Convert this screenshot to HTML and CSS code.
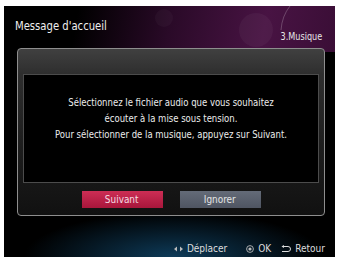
FILE: index.html
```html
<!DOCTYPE html>
<html lang="fr">
<head>
<meta charset="UTF-8">
<title>Message d'accueil</title>
<link rel="stylesheet" href="styles.css">
</head>
<body>
<div id="screen">
  <svg class="deco" width="331" height="60" viewBox="0 0 331 60">
    <circle cx="252" cy="24" r="17" fill="rgba(255,255,255,0.04)"/>
    <circle cx="160" cy="12" r="9" fill="rgba(255,255,255,0.03)"/>
    <path d="M286 0 Q278 10 277 24" stroke="rgba(255,255,255,0.22)" stroke-width="1" fill="none"/>
  </svg>
  <div id="header">
    <div id="title">Message d'accueil</div>
    <div id="step">3.Musique</div>
  </div>
  <div id="panel">
    <div id="message">
      <p>Sélectionnez le fichier audio que vous souhaitez</p>
      <p>écouter à la mise sous tension.</p>
      <p>Pour sélectionner de la musique, appuyez sur Suivant.</p>
    </div>
    <div id="buttons">
      <button class="btn btn-next"><span>Suivant</span></button>
      <button class="btn btn-skip"><span>Ignorer</span></button>
    </div>
  </div>
  <div id="footer">
    <span class="hint hint-move">
      <svg width="9" height="6" viewBox="0 0 9 6"><path d="M0 3 L3 0.5 V5.5 Z M9 3 L6 0.5 V5.5 Z" fill="#bbb"/></svg>Déplacer</span>
    <span class="hint">
      <svg width="8" height="8" viewBox="0 0 8 8"><circle cx="4" cy="4" r="3.4" fill="none" stroke="#bbb" stroke-width="0.9"/><circle cx="4" cy="4" r="1.6" fill="#bbb"/></svg>OK</span>
    <span class="hint">
      <svg width="10" height="8" viewBox="0 0 10 8"><path d="M2.5 1.5 H7 A2.5 2.5 0 0 1 7 6.5 H1" fill="none" stroke="#ddd" stroke-width="1"/><path d="M0.5 1.5 L3 0 V3 Z" fill="#ddd"/></svg>Retour</span>
  </div>
</div>
</body>
</html>
```

FILE: styles.css
```css
body {
  margin: 0;
  background-color: white;
  font-family: "Liberation Sans Narrow", "DejaVu Sans Condensed", Roboto, sans-serif;
}
#screen {
  position: relative;
  margin: 6px 2px 2px 4px;
  width: 331px;
  height: 251px;
  overflow: hidden;
  background:
    radial-gradient(ellipse 150px 45px at 170px 100%, rgba(18, 78, 118, 0.75), rgba(0, 0, 0, 0)),
    linear-gradient(100deg, #000 22%, #2a0a28 50%, #481343 78%, #3a0e36 100%) top left / 100% 46px no-repeat,
    #000;
}
.deco {
  position: absolute;
  top: 0;
  left: 0;
}
#header {
  position: relative;
  display: flex;
  justify-content: space-between;
  align-items: flex-start;
  height: 42px;
  padding: 12px 13px 0 11px;
  box-sizing: border-box;
}
#title {
  color: #eee;
  font-size: 13px;
  line-height: 15px;
  transform: scaleX(0.86);
  transform-origin: left center;
}
#step {
  color: #e6e6e6;
  font-size: 10px;
  line-height: 12px;
  margin-top: 13px;
  transform: scaleX(0.9);
  transform-origin: right center;
}
#panel {
  margin-left: 13px;
  width: 308px;
  box-sizing: border-box;
  border: 1px solid #8e8e8e;
  border-radius: 4px;
  padding: 25px 5px 0;
  background: linear-gradient(to bottom, #404040 0, #2e2e2e 25px, #1d1d1d 60%, #111 100%);
}
#message {
  height: 109px;
  box-sizing: border-box;
  border: 1px solid #4c4c4c;
  background-color: #000;
  padding-top: 20px;
  text-align: center;
  color: #ececec;
  font-size: 11px;
  line-height: 16px;
}
#message p {
  margin: 0;
  transform: scaleX(0.86);
}
#buttons {
  display: flex;
  justify-content: center;
  gap: 17px;
  padding: 8px 0 7px;
}
.btn {
  width: 81px;
  height: 17px;
  border: none;
  padding: 0;
  font-family: inherit;
  font-size: 11px;
}
.btn span {
  display: inline-block;
  transform: scaleX(0.9);
}
.btn-next {
  background: linear-gradient(to bottom, #cc2e55, #a8163b);
  color: #f4dce2;
}
.btn-skip {
  background: linear-gradient(to bottom, #646b78, #4f5562);
  color: #e4e4e4;
}
#footer {
  display: flex;
  justify-content: flex-end;
  gap: 10px;
  margin-top: 27px;
  padding-right: 10px;
  color: #ddd;
  font-size: 10px;
  line-height: 12px;
}
.hint {
  display: flex;
  align-items: center;
  gap: 4px;
}
.hint-move {
  margin-right: 9px;
}
```
